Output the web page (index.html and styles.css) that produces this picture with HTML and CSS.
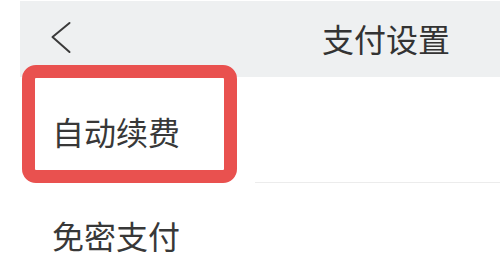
FILE: index.html
```
<!DOCTYPE html>
<html lang="zh-CN">
<head>
<meta charset="utf-8">
<title>支付设置</title>
<link rel="stylesheet" href="styles.css">
</head>
<body>
<div class="page">
  <header class="header">
    <svg class="back" width="22" height="34" viewBox="0 0 22 34" aria-hidden="true">
      <polyline points="19.5,2 2.5,16 19.5,31" fill="none" stroke="#3a3a3a" stroke-width="2" stroke-linecap="round" stroke-linejoin="round"/>
    </svg>
    <h1 class="title">支付设置</h1>
  </header>
  <ul class="list">
    <li class="row row-first">自动续费</li>
    <li class="sep"></li>
    <li class="row row-second">免密支付</li>
  </ul>
  <div class="highlight"></div>
</div>
</body>
</html>
```
FILE: styles.css
```
html, body {
  margin: 0;
  padding: 0;
  background: #ffffff;
}
body {
  width: 500px;
  height: 263px;
  overflow: hidden;
  font-family: "Noto Sans CJK SC", "Noto Sans", sans-serif;
  color: #363636;
}
.page {
  position: relative;
  padding-left: 20px;
  padding-top: 1px;
}
.header {
  height: 76px;
  background: #eef0f1;
  display: flex;
  align-items: center;
  padding-left: 30px;
}
.back {
  display: block;
  margin-top: -2px;
}
.title {
  margin: -2px 0 0 250px;
  font-size: 32px;
  font-weight: 400;
  line-height: 32px;
  color: #333333;
}
.list {
  list-style: none;
  margin: 0;
  padding: 0;
}
.row {
  font-size: 32px;
  line-height: 32px;
  padding-left: 32px;
  color: #383838;
}
.row-first {
  padding-top: 38px;
  padding-bottom: 35px;
}
.sep {
  height: 1px;
  margin-left: 235px;
  background: #ececec;
}
.row-second {
  padding-top: 36px;
  padding-bottom: 10px;
}
.highlight {
  position: absolute;
  left: 22px;
  top: 65px;
  width: 189px;
  height: 92px;
  border: 13px solid #e9514f;
  border-radius: 14px;
}
```
